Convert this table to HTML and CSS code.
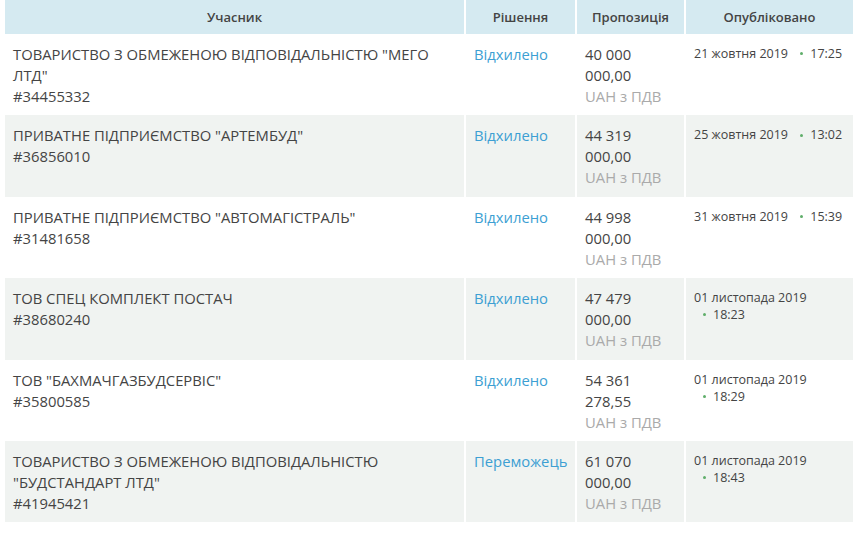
FILE: index.html
```html
<!DOCTYPE html>
<html lang="uk">
<head>
<meta charset="utf-8">
<title>Учасники</title>
<link rel="stylesheet" href="styles.css">
</head>
<body>
<table class="bids">
  <colgroup>
    <col class="c-name"><col class="c-status"><col class="c-price"><col class="c-date">
  </colgroup>
  <thead>
    <tr><th>Учасник</th><th>Рішення</th><th>Пропозиція</th><th>Опубліковано</th></tr>
  </thead>
  <tbody>
    <tr>
      <td>ТОВАРИСТВО З ОБМЕЖЕНОЮ ВІДПОВІДАЛЬНІСТЮ "МЕГО ЛТД"<br>#34455332</td>
      <td><a class="status" href="#">Відхилено</a></td>
      <td>40 000 000,00<br><span class="cur">UAH з ПДВ</span></td>
      <td class="date">21 жовтня 2019 <span class="time"><i class="dot"></i>17:25</span></td>
    </tr>
    <tr class="alt">
      <td>ПРИВАТНЕ ПІДПРИЄМСТВО "АРТЕМБУД"<br>#36856010</td>
      <td><a class="status" href="#">Відхилено</a></td>
      <td>44 319 000,00<br><span class="cur">UAH з ПДВ</span></td>
      <td class="date">25 жовтня 2019 <span class="time"><i class="dot"></i>13:02</span></td>
    </tr>
    <tr>
      <td>ПРИВАТНЕ ПІДПРИЄМСТВО "АВТОМАГІСТРАЛЬ"<br>#31481658</td>
      <td><a class="status" href="#">Відхилено</a></td>
      <td>44 998 000,00<br><span class="cur">UAH з ПДВ</span></td>
      <td class="date">31 жовтня 2019 <span class="time"><i class="dot"></i>15:39</span></td>
    </tr>
    <tr class="alt">
      <td>ТОВ СПЕЦ КОМПЛЕКТ ПОСТАЧ<br>#38680240</td>
      <td><a class="status" href="#">Відхилено</a></td>
      <td>47 479 000,00<br><span class="cur">UAH з ПДВ</span></td>
      <td class="date">01 листопада 2019 <span class="time"><i class="dot"></i>18:23</span></td>
    </tr>
    <tr>
      <td>ТОВ "БАХМАЧГАЗБУДСЕРВІС"<br>#35800585</td>
      <td><a class="status" href="#">Відхилено</a></td>
      <td>54 361 278,55<br><span class="cur">UAH з ПДВ</span></td>
      <td class="date">01 листопада 2019 <span class="time"><i class="dot"></i>18:29</span></td>
    </tr>
    <tr class="alt">
      <td>ТОВАРИСТВО З ОБМЕЖЕНОЮ ВІДПОВІДАЛЬНІСТЮ "БУДСТАНДАРТ ЛТД"<br>#41945421</td>
      <td><a class="status" href="#">Переможець</a></td>
      <td>61 070 000,00<br><span class="cur">UAH з ПДВ</span></td>
      <td class="date">01 листопада 2019 <span class="time"><i class="dot"></i>18:43</span></td>
    </tr>
  </tbody>
</table>
</body>
</html>
```
FILE: styles.css
```css
html, body {
  margin: 0;
  padding: 0;
  background: #fff;
}
body {
  font-family: "Open Sans", "Noto Sans", sans-serif;
  color: #444;
}
.bids {
  margin-left: 3px;
  width: 852px;
  table-layout: fixed;
  border-collapse: separate;
  border-spacing: 2px 0;
}
.c-name { width: 459px; }
.c-status { width: 109px; }
.c-price { width: 107px; }
.c-date { width: 167px; }
.bids th {
  background: #d5eaf1;
  height: 34px;
  padding: 0 8px;
  font-size: 13px;
  font-weight: 600;
  color: #444;
  text-align: center;
  vertical-align: middle;
  box-sizing: border-box;
}
.bids td {
  vertical-align: top;
  padding: 10px 8px 8.4px;
  font-size: 14.8px;
  line-height: 21px;
  color: #444;
  word-wrap: break-word;
}
.bids tr.alt td {
  background: #f0f3f1;
}
.status {
  color: #3d9fd3;
  text-decoration: none;
  white-space: nowrap;
}
.cur {
  color: #aaa;
}
.bids td.date {
  font-size: 12.5px;
  line-height: 17px;
  padding-top: 11px;
  padding-right: 5px;
}
.time {
  display: inline-block;
  white-space: nowrap;
  margin-left: 9px;
}
.dot {
  display: inline-block;
  width: 3px;
  height: 3px;
  border-radius: 50%;
  background: #5fae6a;
  vertical-align: middle;
  margin: 0 7px 2px 0;
}
```
